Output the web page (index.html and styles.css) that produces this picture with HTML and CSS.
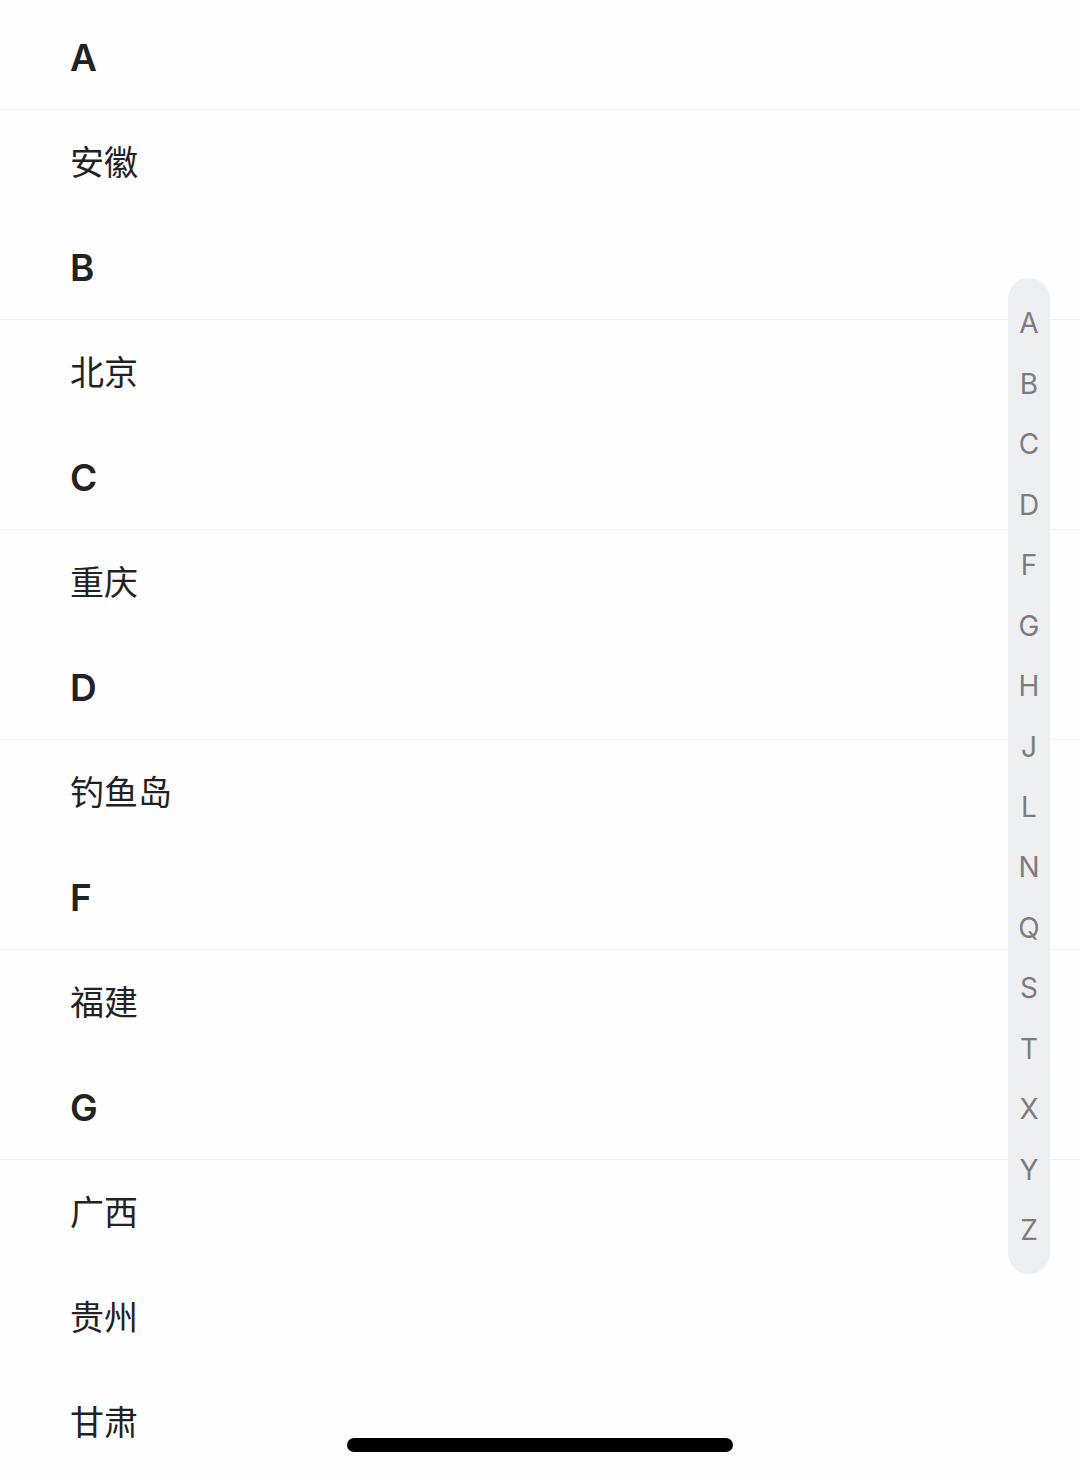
FILE: index.html
```html
<!DOCTYPE html>
<html lang="zh">
<head>
<meta charset="utf-8">
<link rel="stylesheet" href="styles.css">
</head>
<body>
<div class="screen">
  <div class="list">
    <div class="group-head">A</div>
    <div class="item">安徽</div>
    <div class="group-head">B</div>
    <div class="item">北京</div>
    <div class="group-head">C</div>
    <div class="item">重庆</div>
    <div class="group-head">D</div>
    <div class="item">钓鱼岛</div>
    <div class="group-head">F</div>
    <div class="item">福建</div>
    <div class="group-head">G</div>
    <div class="item">广西</div>
    <div class="item">贵州</div>
    <div class="item">甘肃</div>
  </div>
  <nav class="index-bar">
    <span>A</span><span>B</span><span>C</span><span>D</span><span>F</span><span>G</span><span>H</span><span>J</span><span>L</span><span>N</span><span>Q</span><span>S</span><span>T</span><span>X</span><span>Y</span><span>Z</span>
  </nav>
  <div class="home-indicator"></div>
</div>
</body>
</html>
```

FILE: styles.css
```css
html, body {
  margin: 0;
  padding: 0;
  background: #ffffff;
}
.screen {
  position: relative;
  width: 1080px;
  height: 1475px;
  overflow: hidden;
  background: #fefefe;
  font-family: Inter, "Noto Sans CJK SC", sans-serif;
  color: #222222;
}
.list {
  padding-top: 5px;
  display: flex;
  flex-direction: column;
}
.group-head {
  box-sizing: border-box;
  height: 105px;
  padding-left: 70px;
  display: flex;
  align-items: center;
  font-family: Inter, "Noto Sans", sans-serif;
  font-weight: 600;
  font-size: 37px;
  border-bottom: 1px solid #f1f1f1;
  color: #222222;
}
.item {
  box-sizing: border-box;
  height: 105px;
  padding-left: 70px;
  padding-bottom: 5px;
  display: flex;
  align-items: center;
  font-family: "Noto Sans CJK SC", sans-serif;
  font-size: 34px;
  font-weight: 400;
  color: #222222;
}
.index-bar {
  position: absolute;
  left: 1008px;
  top: 278px;
  width: 42px;
  box-sizing: border-box;
  padding: 15px 0 13px;
  border-radius: 21px;
  background: #eeeff1;
  display: flex;
  flex-direction: column;
  align-items: center;
}
.index-bar span {
  height: 60.47px;
  display: flex;
  align-items: center;
  justify-content: center;
  font-family: Inter, "Liberation Sans", sans-serif;
  font-size: 28px;
  font-weight: 400;
  color: #7d7d80;
}
.home-indicator {
  position: absolute;
  left: 347px;
  top: 1438px;
  width: 386px;
  height: 14px;
  border-radius: 7px;
  background: #000000;
}
```
